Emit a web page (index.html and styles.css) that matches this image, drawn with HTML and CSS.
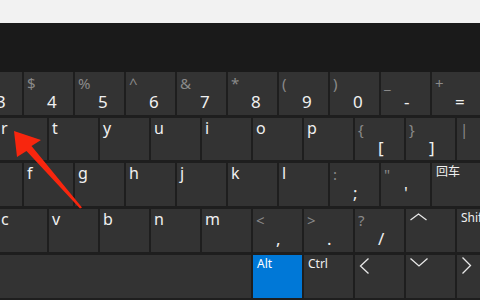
FILE: index.html
```html
<!DOCTYPE html>
<html>
<head>
<meta charset="utf-8">
<link rel="stylesheet" href="styles.css">
</head>
<body>
<div class="topbar"></div>
<div class="band"></div>
<div class="kb">
  <div class="row off1">
    <div class="key"><span class="sym"> </span><span class="main">3</span></div>
    <div class="key"><span class="sym">$</span><span class="main">4</span></div>
    <div class="key"><span class="sym">%</span><span class="main">5</span></div>
    <div class="key"><span class="sym">^</span><span class="main">6</span></div>
    <div class="key"><span class="sym">&amp;</span><span class="main">7</span></div>
    <div class="key"><span class="sym">*</span><span class="main">8</span></div>
    <div class="key"><span class="sym">(</span><span class="main">9</span></div>
    <div class="key"><span class="sym">)</span><span class="main">0</span></div>
    <div class="key"><span class="sym">_</span><span class="main">-</span></div>
    <div class="key"><span class="sym">+</span><span class="main">=</span></div>
  </div>
  <div class="row short off2">
    <div class="key"><span class="ltr">r</span></div>
    <div class="key"><span class="ltr">t</span></div>
    <div class="key"><span class="ltr">y</span></div>
    <div class="key"><span class="ltr">u</span></div>
    <div class="key"><span class="ltr">i</span></div>
    <div class="key"><span class="ltr">o</span></div>
    <div class="key"><span class="ltr">p</span></div>
    <div class="key"><span class="sym">{</span><span class="main">[</span></div>
    <div class="key"><span class="sym">}</span><span class="main">]</span></div>
    <div class="key"><span class="sym">|</span></div>
  </div>
  <div class="row off1">
    <div class="key"><span class="ltr">d</span></div>
    <div class="key"><span class="ltr">f</span></div>
    <div class="key"><span class="ltr">g</span></div>
    <div class="key"><span class="ltr">h</span></div>
    <div class="key"><span class="ltr">j</span></div>
    <div class="key"><span class="ltr">k</span></div>
    <div class="key"><span class="ltr">l</span></div>
    <div class="key"><span class="sym">:</span><span class="main">;</span></div>
    <div class="key"><span class="sym">"</span><span class="main">'</span></div>
    <div class="key wide"><span class="txt">回车</span></div>
  </div>
  <div class="row off2">
    <div class="key"><span class="ltr">c</span></div>
    <div class="key"><span class="ltr">v</span></div>
    <div class="key"><span class="ltr">b</span></div>
    <div class="key"><span class="ltr">n</span></div>
    <div class="key"><span class="ltr">m</span></div>
    <div class="key"><span class="sym">&lt;</span><span class="main">,</span></div>
    <div class="key"><span class="sym">&gt;</span><span class="main">.</span></div>
    <div class="key"><span class="sym">?</span><span class="main">/</span></div>
    <div class="key ikey"><svg viewBox="0 0 49 43" width="49" height="43"><polyline points="4.5,11 12.5,5 20.5,11"/></svg></div>
    <div class="key wide"><span class="txt">Shift</span></div>
  </div>
  <div class="row off5">
    <div class="key space"></div>
    <div class="key alt"><span class="txt">Alt</span></div>
    <div class="key"><span class="txt">Ctrl</span></div>
    <div class="key ikey"><svg viewBox="0 0 49 43" width="49" height="43"><polyline points="13.5,3.5 5.5,11 13.5,18.5"/></svg></div>
    <div class="key ikey"><svg viewBox="0 0 49 43" width="49" height="43"><polyline points="4.5,3.5 13,11 21.5,3.5"/></svg></div>
    <div class="key ikey wide"><svg viewBox="0 0 49 43" width="49" height="43"><polyline points="5.5,2.5 13.5,10.5 5.5,18.5"/></svg></div>
  </div>
</div>
<svg class="arrow" viewBox="0 0 480 300" width="480" height="300">
  <polygon points="14,131 41,140 31.5,146 82,207.5 80,208.5 26.5,151 17,157"/>
</svg>
</body>
</html>
```
FILE: styles.css
```css
body {
  margin: 0;
  width: 480px;
  height: 300px;
  overflow: hidden;
  background: #1e1e1e;
  font-family: "Noto Sans", "Noto Sans CJK SC", sans-serif;
  position: relative;
}
.topbar {
  height: 23px;
  background: #f2f2f2;
}
.band {
  height: 49px;
  background: #1a1a1a;
}
.kb {
  display: flex;
  flex-direction: column;
  gap: 3px;
  overflow: hidden;
}
.row {
  display: flex;
  gap: 2px;
  height: 43px;
}
.row.short { height: 42px; }
.off1 { margin-left: -27px; }
.off2 { margin-left: -2px; }
.off5 { margin-left: -49px; }
.key {
  flex: none;
  width: 49px;
  box-sizing: border-box;
  padding-left: 3px;
  background: #333333;
  color: #f0f0f0;
  display: flex;
  flex-direction: column;
}
.sym {
  font-size: 15px;
  line-height: 18px;
  padding-top: 2px;
  color: #8a8a8a;
  white-space: pre;
}
.main {
  margin-top: auto;
  font-size: 17px;
  line-height: 20px;
  padding: 0 0 6px 20px;
}
.ltr {
  font-size: 16px;
  line-height: 20px;
}
.txt {
  font-size: 12px;
  line-height: 14px;
  padding: 2px 0 0 1px;
  white-space: nowrap;
}
.wide { width: 120px; }
.space { width: 300px; }
.alt {
  background: #0078d7;
  color: #ffffff;
}
.ikey { padding: 0; }
.ikey svg {
  display: block;
  fill: none;
  stroke: #e8e8e8;
  stroke-width: 1.3;
}
.arrow {
  position: absolute;
  left: 0;
  top: 0;
  pointer-events: none;
}
.arrow polygon {
  fill: #f8260e;
}
```
